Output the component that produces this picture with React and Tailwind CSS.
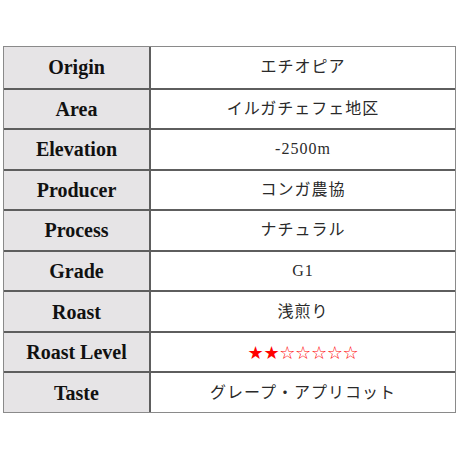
const rows = [
  { label: 'Origin', value: 'エチオピア' },
  { label: 'Area', value: 'イルガチェフェ地区' },
  { label: 'Elevation', value: '-2500m' },
  { label: 'Producer', value: 'コンガ農協' },
  { label: 'Process', value: 'ナチュラル' },
  { label: 'Grade', value: 'G1' },
  { label: 'Roast', value: '浅煎り' },
  { label: 'Roast Level', stars: 2 },
  { label: 'Taste', value: 'グレープ・アプリコット' },
];

const Stars = ({ filled, total = 7 }) => (
  <span className="text-[18px] text-[#ff0000] tracking-[-0.3px]" style={{ fontFamily: '"DejaVu Sans", sans-serif' }}>
    {Array.from({ length: total }).map((_, i) => (
      <span key={i}>{i < filled ? '★' : '☆'}</span>
    ))}
  </span>
);

export default function App() {
  return (
    <div className="w-[460px] h-[460px] bg-white pt-[46px] px-[3px]">
      <div className="w-[453px] h-[367px] grid grid-rows-9 border border-[#8a8a8a]">
        {rows.map((row, i) => (
          <div
            key={row.label}
            className={`grid grid-cols-[147px_1fr] ${i > 0 ? 'border-t-2 border-[#5e5e5e]' : ''}`}
          >
            <div
              className="flex items-center justify-center bg-[#e6e4e6] border-r-2 border-[#5e5e5e] text-[20px] font-bold text-[#111]"
              style={{ fontFamily: '"Liberation Serif", serif' }}
            >
              {row.label}
            </div>
            <div
              className="flex items-center justify-center text-[16px] text-[#2a2a2a] tracking-[1px]"
              style={{ fontFamily: '"Liberation Serif", "Noto Sans CJK JP", serif' }}
            >
              {row.stars !== undefined ? <Stars filled={row.stars} /> : row.value}
            </div>
          </div>
        ))}
      </div>
    </div>
  );
}
